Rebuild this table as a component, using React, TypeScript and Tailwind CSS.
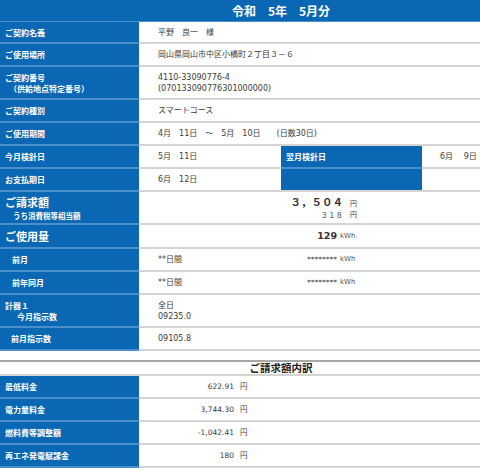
import React from "react";

const lab =
  "w-[139px] shrink-0 bg-[#0a67b3] border-b-2 border-[#4a8fca] text-white font-bold text-[8px] leading-[11px] pl-[5px] flex flex-col justify-center";
const val =
  "flex-1 border-b-2 border-[#d4d4d4] pl-[19px] flex flex-col justify-center text-[8px] leading-[11px] text-[#3c3c3c] whitespace-pre";
const jp = { fontFamily: '"Noto Sans CJK JP", sans-serif' };
const mei = { fontFamily: '"DejaVu Sans", "Noto Sans CJK JP", sans-serif' };

function Row({ h, label, children }: { h: string; label: React.ReactNode; children?: React.ReactNode }) {
  return (
    <div className={`flex ${h}`}>
      <div className={lab} style={jp}>{label}</div>
      <div className={val} style={mei}>{children}</div>
    </div>
  );
}

function Yen({ amount, label }: { amount: string; label: string }) {
  return (
    <div className="flex h-[23px]">
      <div className={lab} style={jp}>{label}</div>
      <div className="flex-1 border-b-2 border-[#d4d4d4] flex items-center text-[7.5px] text-[#3c3c3c]" style={mei}>
        <span className="w-[95px] text-right">{amount}</span>
        <span className="ml-[6px]">円</span>
      </div>
    </div>
  );
}

export default function App() {
  return (
    <div className="w-[480px] h-[471px] overflow-hidden bg-white">
      <div className="w-[562px]">
        <div
          className="h-[22px] bg-[#0a67b3] border-b border-[#4a8fca] flex items-center justify-center text-white font-bold text-[12px] whitespace-pre"
          style={jp}
        >
          令和　5年　5月分
        </div>

        <Row h="h-[22px]" label="ご契約名義">平野　良一　様</Row>
        <Row h="h-[23px]" label="ご使用場所">岡山県岡山市中区小橋町２丁目３－６</Row>
        <Row
          h="h-[33px]"
          label={
            <>
              <span>ご契約番号</span>
              <span>　（供給地点特定番号）</span>
            </>
          }
        >
          <span>4110-33090776-4</span>
          <span>(070133090776301000000)</span>
        </Row>
        <Row h="h-[23px]" label="ご契約種別">スマートコース</Row>
        <Row h="h-[23px]" label="ご使用期間">4月　11日　～　5月　10日　　(日数30日)</Row>

        <div className="flex h-[23px]">
          <div className={lab} style={jp}>今月検針日</div>
          <div className="w-[142px] shrink-0 border-b-2 border-[#d4d4d4] pl-[19px] flex items-center text-[8px] text-[#3c3c3c] whitespace-pre" style={mei}>
            5月　11日
          </div>
          <div className="w-[141px] shrink-0 bg-[#0a67b3] border-b-2 border-[#4a8fca] pl-[5px] flex items-center text-white font-bold text-[8px]" style={jp}>
            翌月検針日
          </div>
          <div className="flex-1 border-b-2 border-[#d4d4d4] pl-[18px] flex items-center text-[8px] text-[#3c3c3c] whitespace-pre" style={mei}>
            6月　 9日
          </div>
        </div>
        <div className="flex h-[23px]">
          <div className={lab} style={jp}>お支払期日</div>
          <div className="w-[142px] shrink-0 border-b-2 border-[#d4d4d4] pl-[19px] flex items-center text-[8px] text-[#3c3c3c] whitespace-pre" style={mei}>
            6月　12日
          </div>
          <div className="w-[141px] shrink-0 bg-[#0a67b3] border-b-2 border-[#d4d4d4]" />
          <div className="flex-1 border-b-2 border-[#d4d4d4]" />
        </div>

        <div className="flex h-[33px]">
          <div className={lab} style={jp}>
            <span className="text-[11px] leading-[16px]">ご請求額</span>
            <span className="text-[7.5px] leading-[11px] pl-[8px]">うち消費税等相当額</span>
          </div>
          <div className="flex-1 border-b-2 border-[#d4d4d4] flex flex-col justify-center text-[#3c3c3c]" style={jp}>
            <div className="flex items-end h-[14px]">
              <span className="w-[204px] text-right font-bold text-[10.5px] leading-[14px] text-[#333]">３，５０４</span>
              <span className="ml-[7px] text-[7px] leading-[11px]">円</span>
            </div>
            <div className="flex items-end h-[11px]">
              <span className="w-[204px] text-right text-[7.5px] leading-[11px]">３１８</span>
              <span className="ml-[7px] text-[7px] leading-[11px]">円</span>
            </div>
          </div>
        </div>

        <div className="flex h-[24px]">
          <div className={lab} style={jp}>
            <span className="text-[11px] leading-[16px]">ご使用量</span>
          </div>
          <div className="flex-1 border-b-2 border-[#d4d4d4] flex items-center text-[#333]" style={mei}>
            <span className="w-[198px] text-right font-bold text-[9.5px]">129</span>
            <span className="ml-[3px] text-[7px] text-[#555]">kWh</span>
          </div>
        </div>

        {["前月", "前年同月"].map((t) => (
          <div key={t} className="flex h-[23px]">
            <div className={lab} style={jp}>
              <span className="pl-[7px]">{t}</span>
            </div>
            <div className="flex-1 border-b-2 border-[#d4d4d4] flex items-center text-[8px] text-[#3c3c3c] relative" style={mei}>
              <span className="absolute left-[19px]">**日間</span>
              <span className="w-[198px] text-right text-[7.5px]">********</span>
              <span className="ml-[3px] text-[7px] text-[#555]">kWh</span>
            </div>
          </div>
        ))}

        <Row
          h="h-[33px]"
          label={
            <>
              <span>計器１</span>
              <span className="pl-[12px]">今月指示数</span>
            </>
          }
        >
          <span>全日</span>
          <span>09235.0</span>
        </Row>
        <Row h="h-[23px]" label={<span className="pl-[6px]">前月指示数</span>}>09105.8</Row>

        <div className="h-[9px]" />
        <div
          className="h-[16px] border-t-2 border-[#a8a8a8] border-b-2 border-b-[#d4d4d4] flex items-center justify-center font-bold text-[10.5px] text-[#222]"
          style={jp}
        >
          ご請求額内訳
        </div>

        <Yen label="最低料金" amount="622.91" />
        <Yen label="電力量料金" amount="3,744.30" />
        <Yen label="燃料費等調整額" amount="-1,042.41" />
        <Yen label="再エネ発電賦課金" amount="180" />
      </div>
    </div>
  );
}
